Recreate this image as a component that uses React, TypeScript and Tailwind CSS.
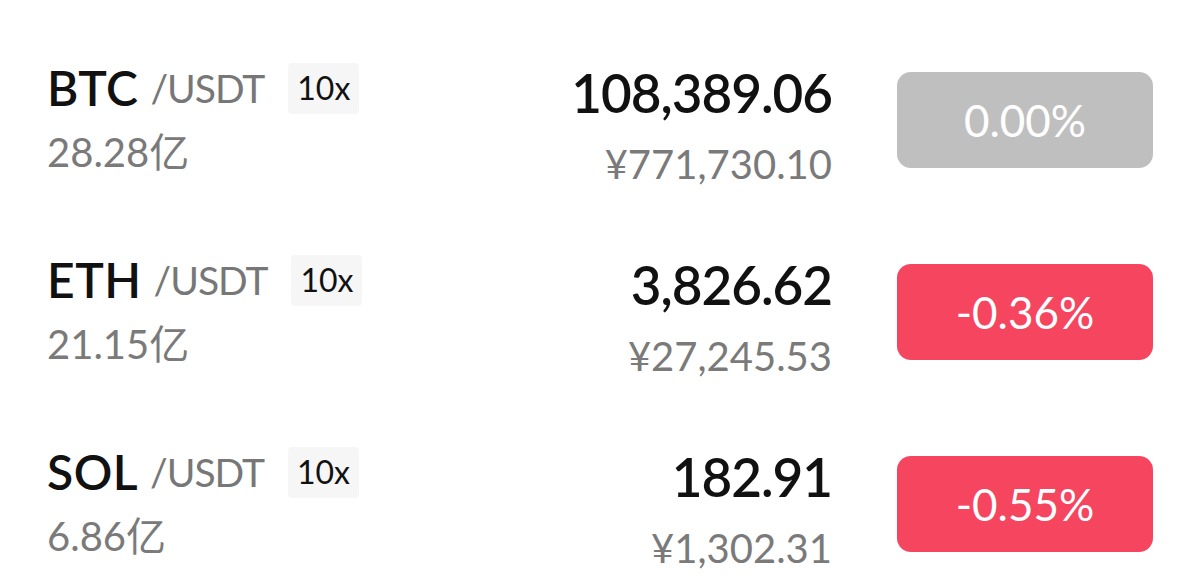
const rows = [
  { base: "BTC", vol: "28.28亿", price: "108,389.06", cny: "¥771,730.10", change: "0.00%", flat: true },
  { base: "ETH", vol: "21.15亿", price: "3,826.62", cny: "¥27,245.53", change: "-0.36%", flat: false },
  { base: "SOL", vol: "6.86亿", price: "182.91", cny: "¥1,302.31", change: "-0.55%", flat: false },
];

export default function App() {
  return (
    <div
      className="min-h-screen w-[1200px] bg-white pt-[24px]"
      style={{ fontFamily: 'Lato, "Noto Sans CJK SC", sans-serif' }}
    >
      {rows.map((r) => (
        <div key={r.base} className="flex h-[192px] items-center px-[47px]">
          {/* Pair + volume */}
          <div className="flex-1">
            <div className="flex h-[56px] items-center">
              <span className="text-[48px] font-semibold leading-[56px] tracking-[0.5px] text-[#111]">{r.base}</span>
              <span className="ml-[12px] text-[39px] leading-[56px] tracking-[-1px] text-[#777]">/USDT</span>
              <span className="ml-[24px] flex h-[51px] w-[71px] items-center justify-center rounded-[4px] bg-[#f6f6f6] text-[32px] text-[#111]">
                10x
              </span>
            </div>
            <div className="mt-[8px] text-[40px] leading-[56px] text-[#7a7a7a]">{r.vol}</div>
          </div>

          {/* Price */}
          <div className="mt-[15px] text-right">
            <div className="text-[53px] font-semibold leading-[60px] tracking-[-1px] text-[#111]">{r.price}</div>
            <div className="mt-[13px] text-[40px] leading-[56px] text-[#7a7a7a]">{r.cny}</div>
          </div>

          {/* Change */}
          <div
            className={
              r.flat
                ? "ml-[65px] flex h-[96px] w-[256px] items-center justify-center rounded-[14px] bg-[#bfbfbf] text-[44px] text-white"
                : "ml-[65px] flex h-[96px] w-[256px] items-center justify-center rounded-[14px] bg-[#f5455f] text-[44px] text-white"
            }
          >
            {r.change}
          </div>
        </div>
      ))}
    </div>
  );
}
